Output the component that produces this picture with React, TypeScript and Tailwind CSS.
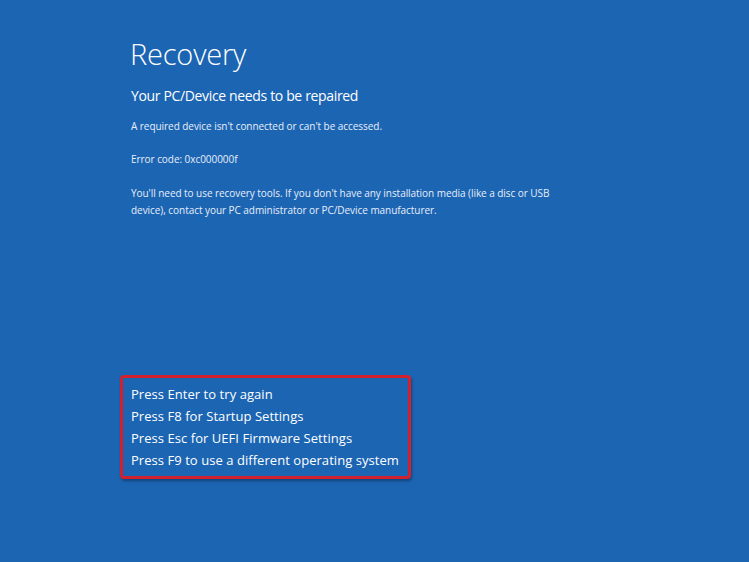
export default function App() {
  return (
    <div
      className="w-[749px] h-[562px] bg-[#1c65b3] text-white flex flex-col pl-[130px] pt-[34px] overflow-hidden"
      style={{ fontFamily: '"Open Sans", "Noto Sans", sans-serif' }}
    >
      <h1 className="text-[29px] font-light leading-[40px] tracking-[-0.2px]">Recovery</h1>
      <h2 className="mt-[10px] text-[14px] font-normal leading-[24px] pl-[1px] tracking-[-0.35px]">
        Your PC/Device needs to be repaired
      </h2>
      <div className="mt-[10px] pl-[1px] text-[10px] leading-[17px] text-[#e8eef8] w-[470px] tracking-[-0.05px]">
        <p>A required device isn't connected or can't be accessed.</p>
        <p className="mt-[16px]">Error code: 0xc000000f</p>
        <p className="mt-[17px]">
          You'll need to use recovery tools. If you don't have any installation media (like a disc or USB
          <br />
          device), contact your PC administrator or PC/Device manufacturer.
        </p>
      </div>
      <div className="mt-[156px] -ml-[10px] w-[291px] rounded-[4px] border-[3px] border-[#d2202f] px-[8px] py-[5px] shadow-[1px_2px_3px_rgba(0,0,0,0.35)]">
        {[
          "Press Enter to try again",
          "Press F8 for Startup Settings",
          "Press Esc for UEFI Firmware Settings",
          "Press F9 to use a different operating system",
        ].map((t) => (
          <div key={t} className="text-[13px] leading-[22px] tracking-[0.05px]">
            {t}
          </div>
        ))}
      </div>
    </div>
  );
}
